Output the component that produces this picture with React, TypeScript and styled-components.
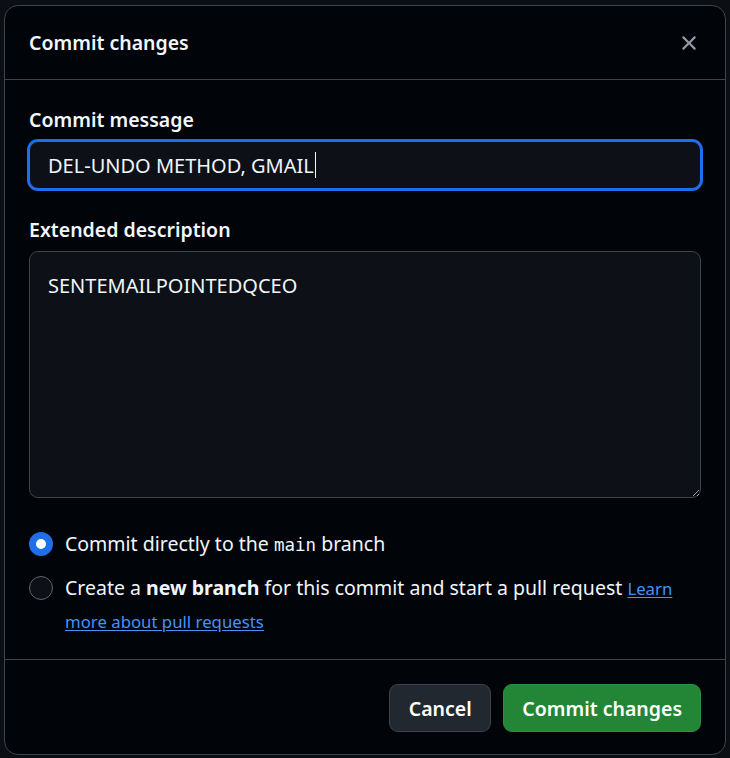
import React from "react";
import styled, { createGlobalStyle } from "styled-components";

const GlobalStyle = createGlobalStyle`
  html, body {
    margin: 0;
    padding: 0;
    background: #0b0e13;
  }
  body {
    font-family: "Noto Sans", "Open Sans", sans-serif;
    color: #f0f6fc;
  }
  * { box-sizing: border-box; }
`;

const Page = styled.div`
  padding: 5px 4px 2px 4px;
`;

const Dialog = styled.div`
  width: 722px;
  background: #010409;
  border: 1px solid #3d444d;
  border-radius: 14px;
  display: flex;
  flex-direction: column;
  overflow: hidden;
`;

const Header = styled.div`
  height: 74px;
  padding: 0 12px 0 24px;
  display: flex;
  align-items: center;
  justify-content: space-between;
  border-bottom: 1px solid #3d444d;
`;

const Title = styled.h1`
  margin: 0;
  font-size: 19.5px;
  font-weight: 600;
  color: #f0f6fc;
`;

const CloseButton = styled.button`
  width: 48px;
  height: 48px;
  border: none;
  background: transparent;
  color: #9198a1;
  display: flex;
  align-items: center;
  justify-content: center;
  padding: 0;
  cursor: pointer;
`;

const Body = styled.div`
  padding: 24px 24px 21px 24px;
  display: flex;
  flex-direction: column;
`;

const Label = styled.label<{ $spaced?: boolean }>`
  display: block;
  font-size: 19.5px;
  font-weight: 600;
  line-height: 31px;
  margin-top: ${(p) => (p.$spaced ? "25px" : "0")};
  margin-bottom: 6px;
  color: #f0f6fc;
`;

const FieldBox = styled.div`
  height: 48px;
  border: 1px solid #1f6feb;
  box-shadow: 0 0 0 2px #1f6feb;
  border-radius: 9px;
  background: #0d1117;
  padding: 0 18px;
  display: flex;
  align-items: center;
  font-size: 20px;
  color: #f0f6fc;
`;

const Caret = styled.span`
  display: inline-block;
  width: 1.5px;
  height: 26px;
  background: #f0f6fc;
  margin-left: 1px;
`;

const TextArea = styled.textarea`
  width: 100%;
  height: 247px;
  border: 1px solid #3d444d;
  border-radius: 9px;
  background: #0d1117;
  color: #f0f6fc;
  font-family: "Noto Sans", "Open Sans", sans-serif;
  font-size: 20px;
  line-height: 31px;
  padding: 18px 18px;
  resize: vertical;
  outline: none;
  color-scheme: dark;
  display: block;
`;

const Options = styled.div`
  margin-top: 30px;
  display: flex;
  flex-direction: column;
  gap: 11px;
`;

const OptionRow = styled.label`
  display: flex;
  align-items: flex-start;
  gap: 12px;
  font-size: 19.5px;
  line-height: 32px;
  color: #f0f6fc;
`;

const Radio = styled.span<{ $checked?: boolean }>`
  flex: none;
  width: 24px;
  height: 24px;
  margin-top: 4px;
  border-radius: 50%;
  background: ${(p) => (p.$checked ? "#ffffff" : "#0d1117")};
  border: ${(p) => (p.$checked ? "7px solid #1f6feb" : "1.5px solid #5d6570")};
`;

const Code = styled.code`
  font-family: "DejaVu Sans Mono", "Liberation Mono", monospace;
  font-size: 17.5px;
`;

const Strong = styled.strong`
  font-weight: 700;
`;

const Link = styled.a`
  color: #4493f8;
  font-size: 0.86em;
  text-decoration: underline;
  text-underline-offset: 2px;
`;

const Footer = styled.div`
  border-top: 1px solid #3d444d;
  padding: 24px 24px 22px 24px;
  display: flex;
  justify-content: flex-end;
  gap: 12px;
`;

const Button = styled.button<{ $primary?: boolean }>`
  height: 48px;
  padding: 0 ${(p) => (p.$primary ? "18px" : "18.5px")};
  border-radius: 9px;
  font-family: "Noto Sans", "Open Sans", sans-serif;
  font-size: 19.5px;
  font-weight: 600;
  color: #ffffff;
  background: ${(p) => (p.$primary ? "#238636" : "#212830")};
  border: 1px solid ${(p) => (p.$primary ? "#2a9142" : "#3d444d")};
  cursor: pointer;
`;

export default function App() {
  return (
    <>
      <GlobalStyle />
      <Page>
        <Dialog role="dialog" aria-label="Commit changes">
          <Header>
            <Title>Commit changes</Title>
            <CloseButton aria-label="Close">
              <svg width="24" height="24" viewBox="0 0 16 16" fill="currentColor">
                <path d="M3.72 3.72a.75.75 0 0 1 1.06 0L8 6.94l3.22-3.22a.749.749 0 0 1 1.275.326.749.749 0 0 1-.215.734L9.06 8l3.22 3.22a.749.749 0 0 1-.326 1.275.749.749 0 0 1-.734-.215L8 9.06l-3.22 3.22a.751.751 0 0 1-1.042-.018.751.751 0 0 1-.018-1.042L6.94 8 3.72 4.78a.75.75 0 0 1 0-1.06Z" />
              </svg>
            </CloseButton>
          </Header>
          <Body>
            <Label>Commit message</Label>
            <FieldBox role="textbox">
              DEL-UNDO METHOD, GMAIL
              <Caret />
            </FieldBox>
            <Label $spaced>Extended description</Label>
            <TextArea defaultValue="SENTEMAILPOINTEDQCEO" />
            <Options>
              <OptionRow>
                <Radio $checked />
                <span>
                  Commit directly to the <Code>main</Code> branch
                </span>
              </OptionRow>
              <OptionRow>
                <Radio />
                <span>
                  Create a <Strong>new branch</Strong> for this commit and start a pull request{" "}
                  <Link href="#">Learn more about pull requests</Link>
                </span>
              </OptionRow>
            </Options>
          </Body>
          <Footer>
            <Button>Cancel</Button>
            <Button $primary>Commit changes</Button>
          </Footer>
        </Dialog>
      </Page>
    </>
  );
}
